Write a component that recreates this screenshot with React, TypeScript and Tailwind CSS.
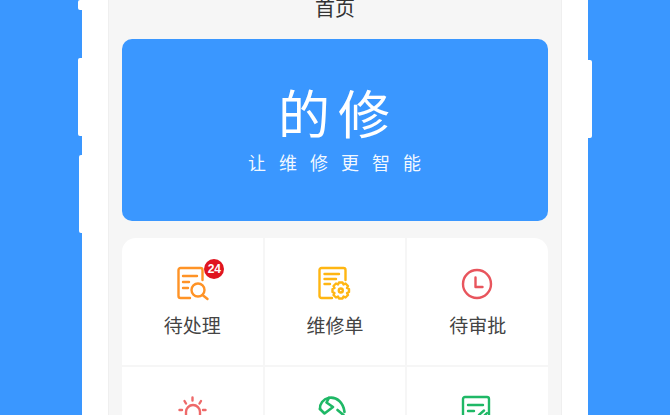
const fontFamily = "font-['Noto_Sans_CJK_SC','Noto_Sans',sans-serif]";

function PendingIcon() {
  return (
    <svg width="40" height="40" viewBox="0 0 40 40" fill="none" stroke="#ff9326" strokeWidth="2.400" strokeLinecap="round" strokeLinejoin="round">
      <path d="M18 34H8.500A2 2 0 0 1 6.500 32V6A2 2 0 0 1 8.500 4H28.500A2 2 0 0 1 30.500 6V16" />
      <path d="M11 12H25M11 18H17M11 24H16" />
      <circle cx="26" cy="26" r="6.500" />
      <path d="M30.500 31L35.500 35" />
    </svg>
  );
}

function OrderIcon() {
  return (
    <svg width="40" height="40" viewBox="0 0 40 40" fill="none" stroke="#ffb612" strokeWidth="2.400" strokeLinecap="round" strokeLinejoin="round">
      <path d="M17 34H6.500A2 2 0 0 1 4.500 32V6A2 2 0 0 1 6.500 4H28.500A2 2 0 0 1 30.500 6V16" />
      <path d="M9.500 10H24M9.500 15H21M9.500 20H15" />
      <path d="M24 18.500H27.500L28.500 20.500L30.500 19.500L33 22L32 24L34 25V28L32 29L33 31L30.500 33.500L28.500 32.500L27.500 34.500H24L23 32.500L21 33.500L18.500 31L19.500 29L17.500 28V25L19.500 24L18.500 22L21 19.500L23 20.500Z" />
      <circle cx="25.800" cy="26.500" r="2" />
    </svg>
  );
}

function ClockIcon() {
  return (
    <svg width="40" height="40" viewBox="0 0 40 40" fill="none" stroke="#e8555d" strokeWidth="2.400" strokeLinecap="round" strokeLinejoin="round">
      <circle cx="19" cy="20" r="14" />
      <path d="M17.500 13.500V23H24.500" />
    </svg>
  );
}

function SunIcon() {
  return (
    <svg width="40" height="40" viewBox="0 0 40 40" fill="none" stroke="#ee6a6a" strokeWidth="2.400" strokeLinecap="round" strokeLinejoin="round">
      <path d="M20.500 4.500V7.500M12.500 8L14 10.500M29 8L27.500 10.500M7.500 17H10M31 17H33.500" />
      <path d="M14 26V19A7 7 0 0 1 28 19V26" />
    </svg>
  );
}

function WrenchIcon() {
  return (
    <svg width="40" height="40" viewBox="0 0 40 40" fill="none" stroke="#1fb866" strokeWidth="2.600" strokeLinecap="round" strokeLinejoin="round">
      <path d="M5 16C4.500 11 8 6 14 4.800C22 3.500 28.500 10 29.500 19" />
      <path d="M5 16L9.500 20.500L18 14L11.500 9.500L14 4.800" />
      <path d="M22.500 17L28.500 22" />
    </svg>
  );
}

function NoteIcon() {
  return (
    <svg width="40" height="40" viewBox="0 0 40 40" fill="none" stroke="#1fb866" strokeWidth="2.400" strokeLinecap="round" strokeLinejoin="round">
      <path d="M5 34V6A2 2 0 0 1 7 4H29A2 2 0 0 1 31 6V34" />
      <path d="M10 12H25M10 18H16M21 22L26 17.500M25 24L29 20" />
    </svg>
  );
}

const menus = [
  { label: "待处理", icon: <PendingIcon />, badge: "24" },
  { label: "维修单", icon: <OrderIcon /> },
  { label: "待审批", icon: <ClockIcon /> },
  { label: "", icon: <SunIcon /> },
  { label: "", icon: <WrenchIcon /> },
  { label: "", icon: <NoteIcon /> },
];

export default function App() {
  return (
    <div className={`relative h-[415px] w-[670px] overflow-hidden bg-[#3a97ff] ${fontFamily}`}>
      {/* phone side buttons */}
      <div className="absolute left-[78px] top-0 h-[10px] w-[6px] rounded-[2px] bg-white" />
      <div className="absolute left-[78px] top-[58px] h-[78px] w-[6px] rounded-[2px] bg-white" />
      <div className="absolute left-[79px] top-[155px] h-[78px] w-[6px] rounded-[2px] bg-white" />
      <div className="absolute left-[586px] top-[60px] h-[78px] w-[6px] rounded-[2px] bg-white" />

      <div className="relative ml-[82px] h-full w-[506px] bg-white px-[26px]">
        <div className="flex h-full w-[454px] flex-col overflow-hidden border-x border-[#efefef] bg-[#f6f6f6] px-[13px]">
          <div className="flex h-[39px] shrink-0 justify-center text-[20px] leading-[16px] text-[#333]">首页</div>

          <div className="flex h-[182px] shrink-0 flex-col items-center rounded-[10px] bg-[#3a97ff] text-white">
            <div className="mt-[35px] h-[75px] pl-[6px] text-[52px] leading-[75px] tracking-[8px]">的修</div>
            <div className="pl-[12px] text-[18px] leading-[26px] tracking-[13px] text-white/95">让维修更智能</div>
          </div>

          <div className="mt-[17px] grid shrink-0 grid-cols-3 gap-[2px] overflow-hidden rounded-t-[14px]">
            {menus.map((menu, i) => (
              <div key={i} className="flex h-[127px] flex-col items-center bg-white pt-[26px]">
                <div className="relative h-[40px] w-[40px]">
                  {menu.icon}
                  {menu.badge && (
                    <span className="absolute -top-[5px] left-[32px] flex h-[20px] w-[20px] items-center justify-center rounded-full bg-[#e0141f] font-['Liberation_Sans',sans-serif] text-[12px] leading-none font-bold text-white">
                      {menu.badge}
                    </span>
                  )}
                </div>
                <div className="mt-[8px] text-[19px] leading-[26px] text-[#444]">{menu.label}</div>
              </div>
            ))}
          </div>
        </div>
      </div>
    </div>
  );
}
